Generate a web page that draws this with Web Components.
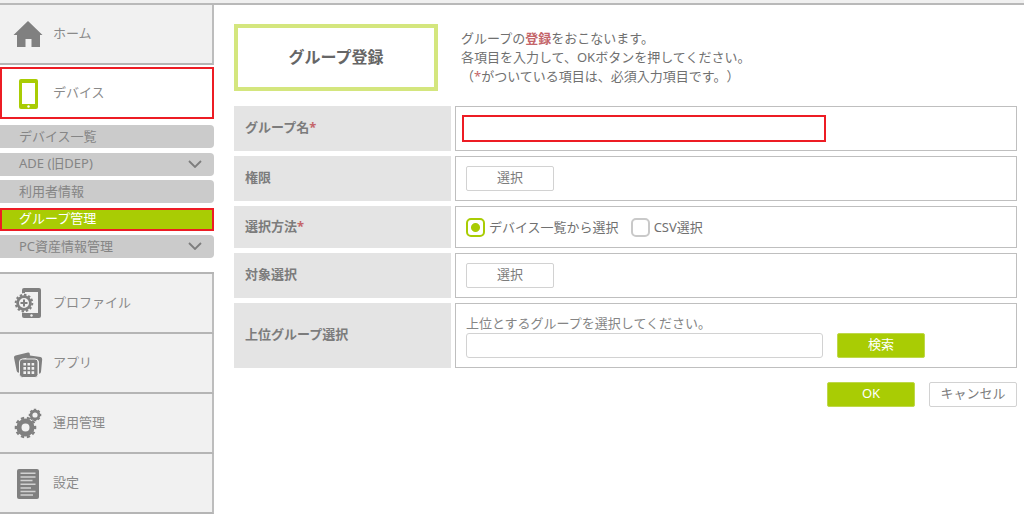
<!DOCTYPE html>
<html lang="ja">
<head>
<meta charset="utf-8">
<meta name="viewport" content="width=device-width, initial-scale=1">
<title>グループ登録</title>
<style>
body {
    margin: 0;
    background: #fff;
    color: #707070;
    font-family: "Noto Sans", "Noto Sans CJK JP", sans-serif;
    font-size: 13px;
    line-height: 19px;
    text-spacing-trim: space-all;
}
em {
    color: #c4666a;
    font-style: normal;
}
.group-name, .parent-group {
    box-sizing: border-box;
    background: #fff;
    font: inherit;
    color: inherit;
    outline: none;
}
.group-name {
    width: 364px;
    height: 27px;
    border: 2px solid #ed1c24;
}
.parent-group {
    width: 357px;
    height: 25px;
    border: 1px solid #d2d2d2;
    border-radius: 3px;
}
.hint {
    display: block;
    color: #858585;
    line-height: 20px;
}
.search {
    display: flex;
    gap: 14px;
}
</style>
</head>
<body>
<app-layout>
    <side-menu slot="menu">
        <menu-item icon="home">ホーム</menu-item>
        <menu-item icon="device" active>デバイス</menu-item>
        <sub-menu>
            <sub-item>デバイス一覧</sub-item>
            <sub-item expandable>ADE (旧DEP)</sub-item>
            <sub-item>利用者情報</sub-item>
            <sub-item active>グループ管理</sub-item>
            <sub-item expandable>PC資産情報管理</sub-item>
        </sub-menu>
        <menu-item icon="profile">プロファイル</menu-item>
        <menu-item icon="apps">アプリ</menu-item>
        <menu-item icon="gears">運用管理</menu-item>
        <menu-item icon="settings">設定</menu-item>
    </side-menu>

    <page-heading>
        <span slot="title">グループ登録</span>
        グループの<em><b>登録</b></em>をおこないます。<br>
        各項目を入力して、OKボタンを押してください。<br>
        （<em>*</em>がついている項目は、必須入力項目です。）
    </page-heading>

    <form-row flush>
        <label slot="label" for="groupName">グループ名<em>*</em></label>
        <input class="group-name" id="groupName" type="text">
    </form-row>
    <form-row>
        <span slot="label">権限</span>
        <ui-button>選択</ui-button>
    </form-row>
    <form-row compact>
        <span slot="label">選択方法<em>*</em></span>
        <choice-group></choice-group>
    </form-row>
    <form-row>
        <span slot="label">対象選択</span>
        <ui-button>選択</ui-button>
    </form-row>
    <form-row>
        <label slot="label" for="parentGroup">上位グループ選択</label>
        <div>
            <span class="hint">上位とするグループを選択してください。</span>
            <div class="search">
                <input class="parent-group" id="parentGroup" type="text">
                <ui-button primary>検索</ui-button>
            </div>
        </div>
    </form-row>
    <form-actions>
        <ui-button primary>OK</ui-button>
        <ui-button>キャンセル</ui-button>
    </form-actions>
</app-layout>

<script>
function define(name, html, setup) {
    const template = document.createElement('template');
    template.innerHTML = html;
    customElements.define(name, class extends HTMLElement {
        constructor() {
            super();
            const shadow = this.attachShadow({ mode: 'open' });
            shadow.appendChild(template.content.cloneNode(true));
            if (setup) {
                setup(this, shadow);
            }
        }
    });
}

const icons = {
    home: `<path d="M15 2 29.500 16H27v12H18.500v-8h-6v8H4V16H.500z" fill="#808080"/>`,
    device: `<rect x="6" y="1" width="19" height="30" rx="2" fill="#a9cc04"/>
        <path d="M9 5h13v21H9z" fill="#fff"/>
        <circle cx="15.500" cy="28.500" r="1.200" fill="#fff"/>`,
    profile: `<rect x="9" y="0" width="19" height="30" rx="2" fill="#808080"/>
        <path d="M12 4h13v21H12z" fill="#f1f1f1"/>
        <circle cx="18.500" cy="27.500" r="1.200" fill="#f1f1f1"/>
        <circle cx="11" cy="15" r="10" fill="#f1f1f1"/>
        <circle cx="11" cy="15" r="8.300" fill="none" stroke="#808080" stroke-width="2" pathLength="24" stroke-dasharray="1.100 .9"/>
        <circle cx="11" cy="15" r="6.400" fill="none" stroke="#808080" stroke-width="2.800"/>
        <path d="M11 11.500v7M7.500 15h7" stroke="#808080" stroke-width="2"/>`,
    apps: `<g transform="translate(0 2)">
        <path d="M2.500 5.500 15 2.600q1.500-.2 1.800 1.200L17 7 9 9q-2 .8-2 3v11l-2-.5q-1-.3-1.300-1.500L1 7.800q-.2-1.800 1.500-2.300z" fill="#808080"/>
        <path d="M14 7q1-1.600 3-1.400L27.500 7q1.800.4 1.700 2.200L28 22q-.3 1.700-2 1.700V13q0-4-4-4h-9z" fill="#808080"/>
        <rect x="6.500" y="9" width="18.500" height="18.500" rx="3" fill="#808080" stroke="#f1f1f1"/>
        <path d="M10.400 14.200h11M10.400 18.400h11M10.400 22.600h11" stroke="#f1f1f1" stroke-width="2.600" stroke-dasharray="2.600 1.500"/>
        </g>`,
    gears: `<circle cx="12.500" cy="19.500" r="6.500" fill="none" stroke="#808080" stroke-width="5"/>
        <circle cx="12.500" cy="19.500" r="9.600" fill="none" stroke="#808080" stroke-width="2.400" pathLength="20" stroke-dasharray="1.100 .9" stroke-dashoffset=".55"/>
        <circle cx="22" cy="7" r="4" fill="none" stroke="#808080" stroke-width="2.800"/>
        <circle cx="22" cy="7" r="5.500" fill="none" stroke="#808080" stroke-width="1.600" pathLength="16" stroke-dasharray="1.100 .9" stroke-dashoffset=".55"/>`,
    settings: `<rect x="4" y="1" width="22" height="30" rx="2" fill="#808080"/>
        <path d="M7.500 5.300h15M7.500 9h15M7.500 12.500h12M7.500 16.200h15M7.500 20h10.500M7.500 23.500h15M7.500 27h12.500" stroke="#d2d2d2" stroke-width="1.500"/>`
};

define('app-layout', `
<style>
:host {
    display: block;
}
header {
    height: 3px;
    background: #f0f0f0;
    border-bottom: 2px solid #b9b9b9;
}
.body {
    display: grid;
    grid-template-columns: 214px 1fr;
    column-gap: 20px;
}
main {
    display: flex;
    flex-direction: column;
    gap: 5px;
    padding: 19px 7px 0 0;
}
</style>
<header></header>
<div class="body">
    <slot name="menu"></slot>
    <main><slot></slot></main>
</div>
`);

define('side-menu', `
<style>
:host {
    display: block;
}
nav {
    display: flex;
    flex-direction: column;
}
</style>
<nav><slot></slot></nav>
`);

define('menu-item', `
<style>
:host {
    display: block;
}
a {
    box-sizing: border-box;
    display: flex;
    align-items: center;
    gap: 10px;
    height: 60px;
    padding-left: 13px;
    background: #f1f1f1;
    border-right: 2px solid #bdbdbd;
    border-bottom: 2px solid #b5b5b5;
    color: #8a8a8a;
    text-decoration: none;
}
span {
    padding-bottom: 2px;
}
:host([active]) a {
    height: 52px;
    margin: 2px 0 6px;
    padding-left: 11px;
    background: #fff;
    border: 2px solid #ed1c24;
}
svg {
    width: 30px;
    height: 30px;
    overflow: visible;
}
</style>
<a href="#"><svg viewBox="0 0 30 30" aria-hidden="true"></svg><span><slot></slot></span></a>
`, (el, shadow) => {
    shadow.querySelector('svg').innerHTML = icons[el.getAttribute('icon')] || '';
});

define('sub-menu', `
<style>
:host {
    display: flex;
    flex-direction: column;
    justify-content: space-between;
    height: 133px;
    padding-bottom: 14px;
    border-bottom: 2px solid #b5b5b5;
}
</style>
<slot></slot>
`);

define('sub-item', `
<style>
:host {
    display: block;
}
a {
    box-sizing: border-box;
    display: flex;
    align-items: center;
    justify-content: space-between;
    height: 23px;
    padding: 0 12px 1px 19px;
    background: #cbcbcb;
    border-radius: 0 4px 4px 0;
    color: #858585;
    text-decoration: none;
}
:host([active]) a {
    background: #a9cc04;
    color: #fff;
    border-radius: 0;
    outline: 2px solid #ed1c24;
    outline-offset: -2px;
}
svg {
    display: none;
    width: 14px;
    height: 8px;
}
:host([expandable]) svg {
    display: block;
}
</style>
<a href="#"><slot></slot><svg viewBox="0 0 14 8" aria-hidden="true"><path d="M1 1l6 6 6-6" fill="none" stroke="#7d7d7d" stroke-width="1.800"/></svg></a>
`);

define('page-heading', `
<style>
:host {
    display: flex;
    align-items: center;
    gap: 23px;
    margin-bottom: 10px;
}
h1 {
    box-sizing: border-box;
    display: flex;
    align-items: center;
    justify-content: center;
    width: 204px;
    height: 67px;
    margin: 0;
    border: 4px solid #d4e67e;
    color: #666;
    font-size: 16px;
}
p {
    margin: 0;
}
</style>
<h1><slot name="title"></slot></h1>
<p><slot></slot></p>
`);

define('form-row', `
<style>
:host {
    display: grid;
    grid-template-columns: 217px 1fr;
    column-gap: 4px;
}
.label, .value {
    box-sizing: border-box;
    display: flex;
    align-items: center;
    min-height: 45px;
}
.label {
    padding: 0 11px 2px;
    background: #e4e4e4;
    color: #7c7c7c;
    font-weight: bold;
}
.value {
    padding: 9px 10px;
    border: 1px solid #bfbfbf;
}
:host([flush]) .value {
    padding: 0 6px;
}
:host([compact]) .label, :host([compact]) .value {
    min-height: 42px;
}
</style>
<div class="label"><slot name="label"></slot></div>
<div class="value"><slot></slot></div>
`);

define('choice-group', `
<style>
:host {
    display: block;
}
div {
    display: flex;
    gap: 12px;
}
label {
    display: flex;
    align-items: center;
    gap: 4px;
}
input {
    appearance: none;
    box-sizing: border-box;
    width: 19px;
    height: 19px;
    margin: 0;
    border: 2px solid #c9c9c9;
    border-radius: 5px;
    background: #fff;
}
input:checked {
    border-color: #a9cc04;
    background: radial-gradient(circle, #a9cc04 4px, #fff 5px);
}
</style>
<div role="radiogroup" aria-label="選択方法">
    <label><input type="radio" name="method" checked>デバイス一覧から選択</label>
    <label><input type="radio" name="method">CSV選択</label>
</div>
`);

define('form-actions', `
<style>
:host {
    display: flex;
    justify-content: flex-end;
    gap: 14px;
    margin-top: 9px;
}
</style>
<slot></slot>
`);

define('ui-button', `
<style>
:host {
    display: block;
}
button {
    box-sizing: border-box;
    display: block;
    width: 88px;
    height: 25px;
    padding: 0 0 2px;
    border: 1px solid #d2d2d2;
    border-radius: 2px;
    background: #fff;
    color: #7c7c7c;
    font: inherit;
    cursor: pointer;
}
:host([primary]) button {
    background: #a9cc04;
    border-color: #bfd84a;
    color: #fff;
}
</style>
<button type="button"><slot></slot></button>
`);
</script>
</body>
</html>
